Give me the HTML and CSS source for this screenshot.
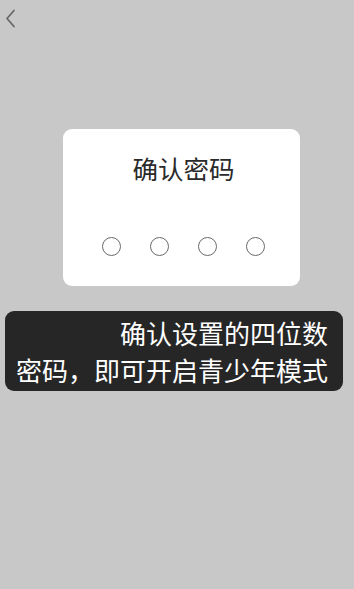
FILE: index.html
```html
<!DOCTYPE html>
<html lang="zh-CN">
<head>
<meta charset="utf-8">
<link rel="stylesheet" href="styles.css">
</head>
<body>
<div class="page">
  <div class="topbar">
    <svg class="back" width="12" height="20" viewBox="0 0 12 20"><path d="M10 2.5 L3 10.5 L10 18.5" fill="none" stroke="#666" stroke-width="1.7" stroke-linecap="round" stroke-linejoin="round"/></svg>
  </div>
  <div class="card">
    <div class="title">确认密码</div>
    <div class="dots">
      <span class="dot"></span><span class="dot"></span><span class="dot"></span><span class="dot"></span>
    </div>
  </div>
  <div class="toast">确认设置的四位数<br>密码，即可开启青少年模式</div>
</div>
</body>
</html>
```
FILE: styles.css
```css
html, body {
  margin: 0;
  padding: 0;
  background: #c8c8c8;
}
body {
  width: 354px;
  height: 589px;
  overflow: hidden;
  font-family: "Noto Sans CJK SC", "Noto Sans", sans-serif;
}
.page {
  display: flex;
  flex-direction: column;
}
.topbar {
  height: 129px;
  padding: 8px 0 0 4px;
  box-sizing: border-box;
}
.back {
  display: block;
}
.card {
  margin-left: 63px;
  width: 237px;
  height: 157px;
  background: #fff;
  border-radius: 9px;
  box-sizing: border-box;
  padding: 24px 0 0 4px;
  display: flex;
  flex-direction: column;
  align-items: center;
}
.title {
  font-size: 25.5px;
  line-height: 30px;
  color: #2a2a2a;
}
.dots {
  margin-top: 54px;
  display: flex;
  gap: 29px;
}
.dot {
  width: 19px;
  height: 19px;
  box-sizing: border-box;
  border: 1.6px solid #6a6a6a;
  border-radius: 50%;
}
.toast {
  margin: 25px 11px 0 5px;
  height: 80px;
  box-sizing: border-box;
  background: #262626;
  border-radius: 9px;
  color: #fff;
  font-size: 26px;
  line-height: 37px;
  text-align: right;
  padding: 3px 15px 0 10px;
  white-space: nowrap;
}
```
